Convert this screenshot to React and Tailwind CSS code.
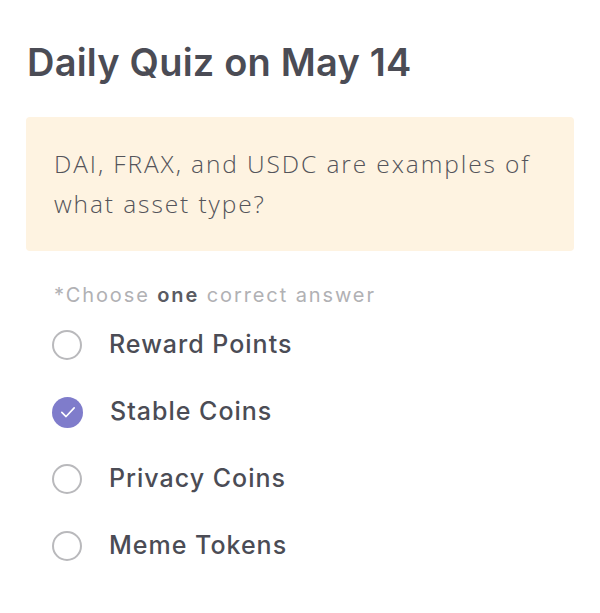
export default function App() {
  const options = [
    { label: "Reward Points", checked: false },
    { label: "Stable Coins", checked: true },
    { label: "Privacy Coins", checked: false },
    { label: "Meme Tokens", checked: false },
  ];
  return (
    <div className="w-[600px] h-[613px] bg-white pt-[41px] px-[26px]" style={{ fontFamily: "Inter, sans-serif" }}>
      <h1 className="pl-[1px] text-[38px] leading-[42px] font-semibold text-[#4b4c55] tracking-[0.2px]">Daily Quiz on May 14</h1>
      <div className="mt-[34px] h-[134px] rounded-[4px] bg-[#fef3e1] px-[28px] pt-[27px]">
        <p className="text-[24.5px] leading-[40px] text-[#54545a] tracking-[1.9px] whitespace-nowrap" style={{ fontFamily: "'Open Sans', sans-serif", fontWeight: 300 }}>
          DAI, FRAX, and USDC are examples of
          <br />
          what asset type?
        </p>
      </div>
      <div className="mt-[30px] pl-[28px] text-[20px] leading-[28px] text-[#b1b1b4] tracking-[1.9px]">
        *Choose <span className="font-semibold text-[#5a5b62]">one</span> correct answer
      </div>
      <div className="mt-[21px] flex flex-col gap-[37px] pl-[26px]">
        {options.map((o) => (
          <div key={o.label} className="flex items-center h-[30px]">
            {o.checked ? (
              <span className="flex h-[31px] w-[31px] items-center justify-center rounded-full bg-[#7f7ccb]">
                <svg width="22" height="22" viewBox="0 0 16 16" fill="none">
                  <path d="M3.5 8.3 L6.6 11.3 L12.5 5" stroke="white" strokeWidth="1.2" strokeLinecap="round" strokeLinejoin="round" />
                </svg>
              </span>
            ) : (
              <span className="h-[30px] w-[30px] rounded-full border-2 border-[#b9b9bc] bg-white" />
            )}
            <span className="ml-[27px] text-[25px] font-medium text-[#4b4c55] tracking-[1px]">{o.label}</span>
          </div>
        ))}
      </div>
    </div>
  );
}
